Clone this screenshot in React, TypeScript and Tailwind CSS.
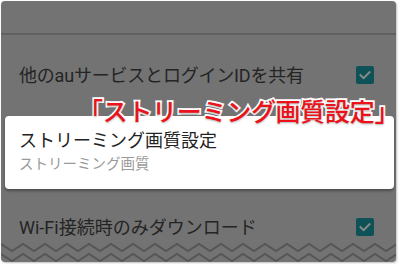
import React from 'react';

const FONT = 'Roboto, "Noto Sans CJK JP", sans-serif';

function CheckBox() {
  return (
    <div className="w-[18px] h-[18px] rounded-[2px] bg-[#0e5257] flex items-center justify-center shrink-0">
      <svg width="14" height="14" viewBox="0 0 14 14" fill="none">
        <path d="M2.5 7.2 L5.6 10.2 L11.5 4.2" stroke="#8a8a8a" strokeWidth="1.9" strokeLinecap="square" />
      </svg>
    </div>
  );
}

function ZigZag() {
  const period = 22;
  const amp = 7;
  const line = (y0: number) => {
    let d = `M0 ${y0}`;
    for (let x = 0; x <= 400; x += period) {
      d += ` L${x + period / 2} ${y0 + amp} L${x + period} ${y0}`;
    }
    return d;
  };
  return (
    <svg width="395" height="22" viewBox="0 0 395 22" className="block rounded-b-[4px]">
      <path d={line(4)} stroke="#565656" strokeWidth="2" fill="none" />
      <path d={line(14)} stroke="#565656" strokeWidth="2" fill="none" />
    </svg>
  );
}

export default function App() {
  return (
    <div className="w-[400px] h-[264px] bg-white pt-[1px] pl-[1px]" style={{ fontFamily: FONT }}>
      <div className="relative w-[395px] h-[261px] rounded-[4px] bg-[#737373] flex flex-col shadow-[1px_1px_2px_rgba(0,0,0,0.25)]">
        {/* toolbar area */}
        <div className="h-[32px] shrink-0" />
        <div className="h-[2px] bg-[#616161] shrink-0" />

        {/* row 1 */}
        <div className="flex justify-between items-start pl-[18px] pr-[22px] pt-[31px] h-[81px] shrink-0">
          <span className="text-[18px] leading-[20px] text-[#242424] tracking-[-0.2px]">他のauサービスとログインIDを共有</span>
          <CheckBox />
        </div>

        {/* card */}
        <div className="ml-[4px] mr-[2px] h-[73px] rounded-[4px] bg-white pt-[14px] pl-[14px] shrink-0 shadow-[0_2px_3px_rgba(0,0,0,0.35)]">
          <div className="text-[18px] leading-[22px] text-[#222222]">ストリーミング画質設定</div>
          <div className="mt-[4px] text-[14.5px] leading-[18px] text-[#9a9a9a]">ストリーミング画質</div>
        </div>

        {/* row 2 */}
        <div className="flex justify-between items-start pl-[18px] pr-[22px] pt-[29px] shrink-0">
          <span className="text-[18px] leading-[20px] text-[#242424]">Wi-Fi接続時のみダウンロード</span>
          <CheckBox />
        </div>

        <div className="mt-auto">
          <ZigZag />
        </div>

        {/* annotation label */}
        <div
          className="absolute left-[77px] top-[95px] text-[25px] leading-[28px] font-medium text-[#ec1219] whitespace-nowrap tracking-[-0.3px] [-webkit-text-stroke:3.5px_white] [paint-order:stroke_fill] [text-shadow:0_1px_2px_rgba(0,0,0,0.3)]"
          style={{ fontFamily: '"Noto Sans CJK JP", sans-serif' }}
        >
          「ストリーミング画質設定」
        </div>
      </div>
    </div>
  );
}
